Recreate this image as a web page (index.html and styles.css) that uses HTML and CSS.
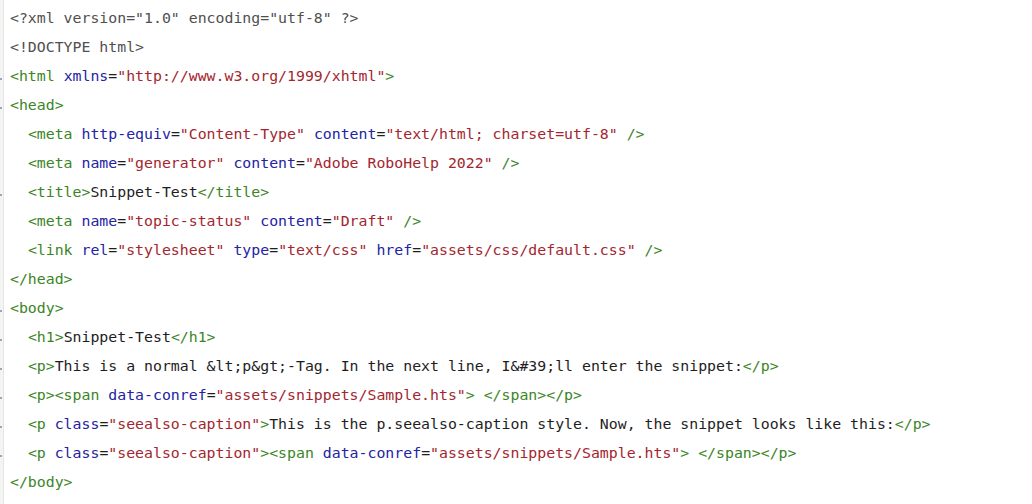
FILE: index.html
```html
<!DOCTYPE html>
<html lang="en">
<head>
<meta charset="utf-8">
<title>Source view</title>
<link rel="stylesheet" href="styles.css">
</head>
<body>
<div class="editor">
  <div class="gutter">
    <span class="tick"></span><span class="tick"></span><span class="tick fold"></span><span class="tick fold"></span><span class="tick"></span><span class="tick"></span><span class="tick fold"></span><span class="tick"></span><span class="tick"></span><span class="tick"></span><span class="tick fold"></span><span class="tick fold"></span><span class="tick fold"></span><span class="tick fold"></span><span class="tick fold"></span><span class="tick fold"></span><span class="tick"></span>
  </div>
  <div class="code">
    <div class="line"><span class="pi">&lt;?xml version="1.0" encoding="utf-8" ?&gt;</span></div>
    <div class="line"><span class="pi">&lt;!DOCTYPE html&gt;</span></div>
    <div class="line"><span class="tg">&lt;html</span> <span class="at">xmlns</span>=<span class="vl">"http://www.w3.org/1999/xhtml"</span><span class="tg">&gt;</span></div>
    <div class="line"><span class="tg">&lt;head&gt;</span></div>
    <div class="line">  <span class="tg">&lt;meta</span> <span class="at">http-equiv</span>=<span class="vl">"Content-Type"</span> <span class="at">content</span>=<span class="vl">"text/html; charset=utf-8"</span> <span class="tg">/&gt;</span></div>
    <div class="line">  <span class="tg">&lt;meta</span> <span class="at">name</span>=<span class="vl">"generator"</span> <span class="at">content</span>=<span class="vl">"Adobe RoboHelp 2022"</span> <span class="tg">/&gt;</span></div>
    <div class="line">  <span class="tg">&lt;title&gt;</span>Snippet-Test<span class="tg">&lt;/title&gt;</span></div>
    <div class="line">  <span class="tg">&lt;meta</span> <span class="at">name</span>=<span class="vl">"topic-status"</span> <span class="at">content</span>=<span class="vl">"Draft"</span> <span class="tg">/&gt;</span></div>
    <div class="line">  <span class="tg">&lt;link</span> <span class="at">rel</span>=<span class="vl">"stylesheet"</span> <span class="at">type</span>=<span class="vl">"text/css"</span> <span class="at">href</span>=<span class="vl">"assets/css/default.css"</span> <span class="tg">/&gt;</span></div>
    <div class="line"><span class="tg">&lt;/head&gt;</span></div>
    <div class="line"><span class="tg">&lt;body&gt;</span></div>
    <div class="line">  <span class="tg">&lt;h1&gt;</span>Snippet-Test<span class="tg">&lt;/h1&gt;</span></div>
    <div class="line">  <span class="tg">&lt;p&gt;</span>This is a normal &amp;lt;p&amp;gt;-Tag. In the next line, I&amp;#39;ll enter the snippet:<span class="tg">&lt;/p&gt;</span></div>
    <div class="line">  <span class="tg">&lt;p&gt;&lt;span</span> <span class="at">data-conref</span>=<span class="vl">"assets/snippets/Sample.hts"</span><span class="tg">&gt;</span> <span class="tg">&lt;/span&gt;&lt;/p&gt;</span></div>
    <div class="line">  <span class="tg">&lt;p</span> <span class="at">class</span>=<span class="vl">"seealso-caption"</span><span class="tg">&gt;</span>This is the p.seealso-caption style. Now, the snippet looks like this:<span class="tg">&lt;/p&gt;</span></div>
    <div class="line">  <span class="tg">&lt;p</span> <span class="at">class</span>=<span class="vl">"seealso-caption"</span><span class="tg">&gt;&lt;span</span> <span class="at">data-conref</span>=<span class="vl">"assets/snippets/Sample.hts"</span><span class="tg">&gt;</span> <span class="tg">&lt;/span&gt;&lt;/p&gt;</span></div>
    <div class="line"><span class="tg">&lt;/body&gt;</span></div>
  </div>
</div>
</body>
</html>
```

FILE: styles.css
```css
html, body {
  margin: 0;
  padding: 0;
  background: #ffffff;
}

.editor {
  display: flex;
  height: 504px;
  overflow: hidden;
}

.gutter {
  width: 3px;
  flex: none;
  background: #f4f4f4;
  border-right: 1px solid #e6e6e6;
  display: flex;
  flex-direction: column;
  padding-top: 4px;
}

.tick {
  display: block;
  height: 29px;
  flex: none;
  position: relative;
}

.tick.fold::after {
  content: "";
  position: absolute;
  left: 0;
  top: 16px;
  width: 2px;
  height: 2px;
  background: #9aa7b8;
}

.code {
  padding: 4px 0 0 6px;
  font-family: "DejaVu Sans Mono", "Liberation Mono", monospace;
  font-size: 14.85px;
  line-height: 29px;
  color: #1e1e1e;
}

.line {
  height: 29px;
  white-space: pre;
}

.pi { color: #505050; }
.tg { color: #3b8526; }
.at { color: #2323a3; }
.vl { color: #a3262e; }
```
